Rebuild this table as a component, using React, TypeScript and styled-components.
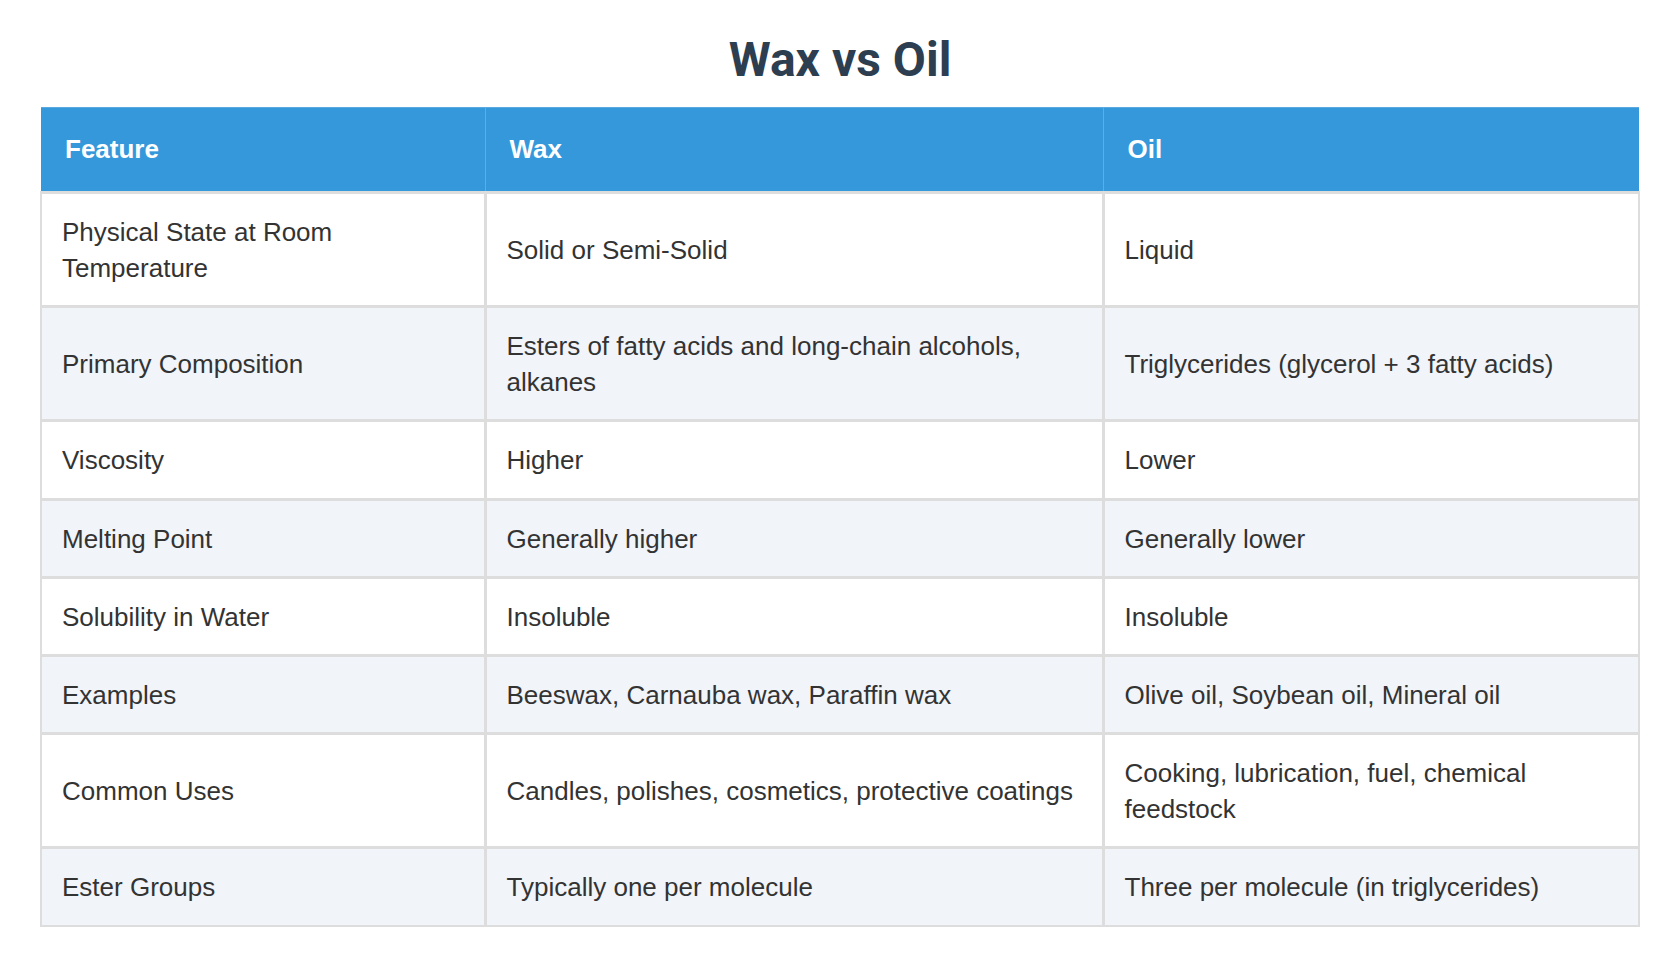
import React from "react";
import styled, { createGlobalStyle } from "styled-components";

const GlobalStyle = createGlobalStyle`
  html, body {
    margin: 0;
    padding: 0;
    background: #ffffff;
  }
  body {
    font-family: "Liberation Sans", Arial, sans-serif;
    color: #333333;
  }
`;

const Page = styled.main`
  padding: 32px 40px 40px;
  box-sizing: border-box;
  width: 1680px;
`;

const Title = styled.h1`
  margin: 0 0 19px;
  text-align: center;
  font-family: Roboto, "Liberation Sans", sans-serif;
  font-weight: 700;
  font-size: 48px;
  line-height: 56px;
  color: #2c3e50;
`;

const Table = styled.table`
  width: 1598px;
  border-collapse: collapse;
  table-layout: fixed;
  font-size: 26px;
  line-height: 36px;
`;

const HeadCell = styled.th`
  background: #3498db;
  color: #ffffff;
  font-weight: 700;
  text-align: left;
  padding: 23px 23px 24px 24px;
  border-top: 1px solid #5aa9e0;
  border-right: 1px solid #5aaee6;
  border-bottom: 3px solid #dddddd;
  &:last-child {
    border-right: none;
  }
`;

const Row = styled.tr<{ $alt: boolean }>`
  background: ${(p) => (p.$alt ? "#f1f4f9" : "#ffffff")};
`;

const Cell = styled.td`
  padding: 20px 20px 19.2px;
  vertical-align: middle;
  border: 3px solid #dddddd;
  color: #333333;
  &:first-child {
    border-left: 2px solid #dddddd;
  }
  &:last-child {
    border-right: 2px solid #dddddd;
  }
  tr:last-child > & {
    border-bottom: 2px solid #dddddd;
  }
`;

const rows: [string, string, string][] = [
  ["Physical State at Room Temperature", "Solid or Semi-Solid", "Liquid"],
  [
    "Primary Composition",
    "Esters of fatty acids and long-chain alcohols, alkanes",
    "Triglycerides (glycerol + 3 fatty acids)",
  ],
  ["Viscosity", "Higher", "Lower"],
  ["Melting Point", "Generally higher", "Generally lower"],
  ["Solubility in Water", "Insoluble", "Insoluble"],
  ["Examples", "Beeswax, Carnauba wax, Paraffin wax", "Olive oil, Soybean oil, Mineral oil"],
  [
    "Common Uses",
    "Candles, polishes, cosmetics, protective coatings",
    "Cooking, lubrication, fuel, chemical feedstock",
  ],
  ["Ester Groups", "Typically one per molecule", "Three per molecule (in triglycerides)"],
];

export default function App() {
  return (
    <>
      <GlobalStyle />
      <Page>
        <Title>Wax vs Oil</Title>
        <Table>
          <colgroup>
            <col style={{ width: 444 }} />
            <col style={{ width: 618 }} />
            <col style={{ width: 536 }} />
          </colgroup>
          <thead>
            <tr>
              <HeadCell>Feature</HeadCell>
              <HeadCell>Wax</HeadCell>
              <HeadCell>Oil</HeadCell>
            </tr>
          </thead>
          <tbody>
            {rows.map((r, i) => (
              <Row key={r[0]} $alt={i % 2 === 1}>
                <Cell>{r[0]}</Cell>
                <Cell>{r[1]}</Cell>
                <Cell>{r[2]}</Cell>
              </Row>
            ))}
          </tbody>
        </Table>
      </Page>
    </>
  );
}
